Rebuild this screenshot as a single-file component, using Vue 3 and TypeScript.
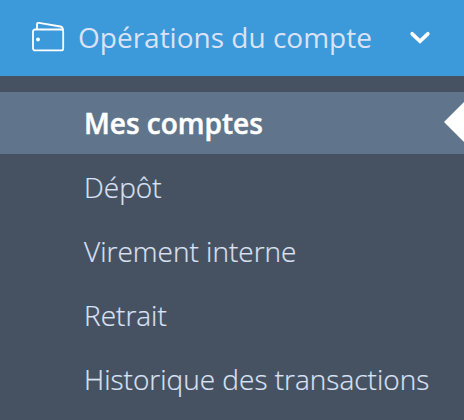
<script setup lang="ts">
interface MenuItem {
  label: string
  active?: boolean
}

const items: MenuItem[] = [
  { label: 'Mes comptes', active: true },
  { label: 'Dépôt' },
  { label: 'Virement interne' },
  { label: 'Retrait' },
  { label: 'Historique des transactions' },
]
</script>

<template>
  <nav class="sidebar">
    <header class="head">
      <svg class="wallet" width="34" height="32" viewBox="0 0 34 32" fill="none" stroke="#fff" stroke-width="1.8" stroke-linejoin="round">
        <path d="M6 7.5 V2.3 Q6 0.6 8 0.9 L29.5 4.5 Q32 5 32 8.5" />
        <rect x="2" y="7.5" width="30.2" height="20.9" rx="2" />
        <circle cx="7" cy="17.5" r="2" fill="#fff" stroke="none" />
      </svg>
      <span class="title">Opérations du compte</span>
      <svg class="chevron" width="22" height="16" viewBox="0 0 22 16" fill="none" stroke="#fff" stroke-width="3.7" stroke-linecap="round">
        <path d="M3.2 3.8 L11 11.3 L18.8 3.8" />
      </svg>
    </header>
    <ul class="list">
      <li v-for="item in items" :key="item.label" class="item" :class="{ active: item.active }">
        <span class="label">{{ item.label }}</span>
      </li>
    </ul>
  </nav>
</template>

<style>
body {
  margin: 0;
}
</style>

<style scoped>
.sidebar {
  width: 464px;
  height: 420px;
  overflow: hidden;
  background: #465262;
  font-family: 'Open Sans', sans-serif;
  font-weight: 300;
}
.head {
  height: 76px;
  display: flex;
  align-items: center;
  box-sizing: border-box;
  padding-left: 31px;
  background: #3c99da;
  color: #dbe2f5;
}
.wallet {
  flex: none;
  margin-bottom: 1px;
}
.title {
  width: 318px;
  margin-left: 13px;
  padding-bottom: 2px;
  font-size: 28px;
  font-weight: 400;
  line-height: 38px;
  white-space: nowrap;
}
.chevron {
  flex: none;
  margin-left: 13px;
}
.list {
  list-style: none;
  margin: 0;
  padding: 16px 0 0;
}
.item {
  position: relative;
  height: 64px;
  padding-left: 84px;
  color: #dbe2f5;
  font-size: 28px;
  line-height: 66px;
  white-space: nowrap;
  -webkit-text-stroke: 0.2px currentColor;
}
.item.active {
  height: 62px;
  line-height: 62px;
  background: #60748b;
  color: #fff;
  font-weight: 600;
  -webkit-text-stroke: 0.5px currentColor;
}
.item.active::after {
  content: '';
  position: absolute;
  right: 0;
  top: 10px;
  border: solid transparent;
  border-width: 20px 20px 20px 0;
  border-right-color: #fff;
}
</style>
